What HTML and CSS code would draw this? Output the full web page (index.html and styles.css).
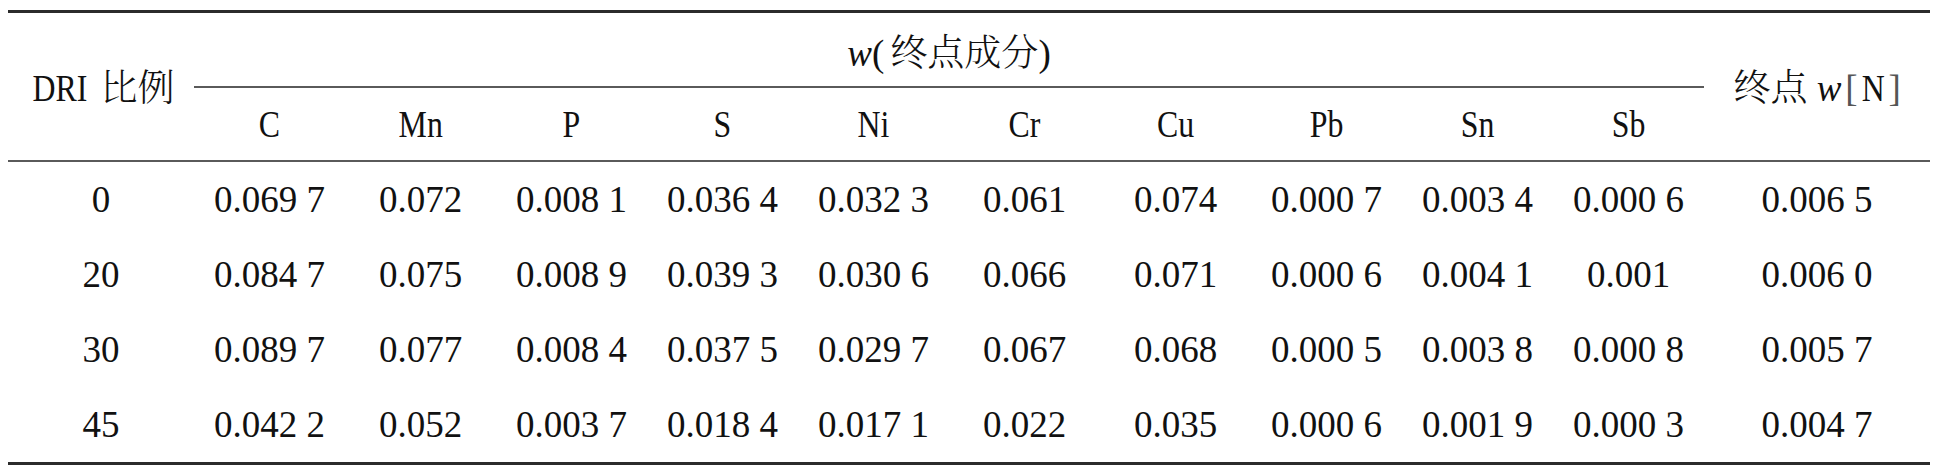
FILE: index.html
```html
<!DOCTYPE html>
<html lang="en">
<head>
<meta charset="utf-8">
<title>DRI table</title>
<link rel="stylesheet" href="styles.css">
</head>
<body>
<table class="tbl">
  <colgroup>
    <col class="c-first">
    <col class="c-el"><col class="c-el"><col class="c-el"><col class="c-el"><col class="c-el">
    <col class="c-el"><col class="c-el"><col class="c-el"><col class="c-el"><col class="c-el">
    <col class="c-last">
  </colgroup>
  <thead>
    <tr class="h1">
      <th rowspan="2" class="span2"><span class="nx">DRI</span> <span class="cjk" lang="zh-CN">比例</span></th>
      <th colspan="10" class="group"><i class="it">w</i><span class="paren">(</span><span class="cjk" lang="zh-CN">终点成分</span>)</th>
      <th rowspan="2" class="span2"><span class="cjk" lang="zh-CN">终点</span> <i class="it">w</i><span class="br">[</span><span class="nx">N</span><span class="br br-r">]</span></th>
    </tr>
    <tr class="h2">
      <th><span class="nx">C</span></th>
      <th><span class="nx">Mn</span></th>
      <th><span class="nx">P</span></th>
      <th><span class="nx">S</span></th>
      <th><span class="nx">Ni</span></th>
      <th><span class="nx">Cr</span></th>
      <th><span class="nx">Cu</span></th>
      <th><span class="nx">Pb</span></th>
      <th><span class="nx">Sn</span></th>
      <th><span class="nx">Sb</span></th>
    </tr>
  </thead>
  <tbody>
    <tr>
      <td>0</td><td>0.069 7</td><td>0.072</td><td>0.008 1</td><td>0.036 4</td><td>0.032 3</td><td>0.061</td><td>0.074</td><td>0.000 7</td><td>0.003 4</td><td>0.000 6</td><td>0.006 5</td>
    </tr>
    <tr>
      <td>20</td><td>0.084 7</td><td>0.075</td><td>0.008 9</td><td>0.039 3</td><td>0.030 6</td><td>0.066</td><td>0.071</td><td>0.000 6</td><td>0.004 1</td><td>0.001</td><td>0.006 0</td>
    </tr>
    <tr>
      <td>30</td><td>0.089 7</td><td>0.077</td><td>0.008 4</td><td>0.037 5</td><td>0.029 7</td><td>0.067</td><td>0.068</td><td>0.000 5</td><td>0.003 8</td><td>0.000 8</td><td>0.005 7</td>
    </tr>
    <tr>
      <td>45</td><td>0.042 2</td><td>0.052</td><td>0.003 7</td><td>0.018 4</td><td>0.017 1</td><td>0.022</td><td>0.035</td><td>0.000 6</td><td>0.001 9</td><td>0.000 3</td><td>0.004 7</td>
    </tr>
  </tbody>
</table>
</body>
</html>
```

FILE: styles.css
```css
html, body {
  background: #ffffff;
}

body {
  margin: 10px 0 0 8px;
  font-family: "Liberation Serif", "Times New Roman", serif;
  font-size: 37px;
  color: #111111;
}

.tbl {
  border-collapse: separate;
  border-spacing: 0;
  table-layout: fixed;
  width: 1922px;
  border-top: 3px solid #2b2b2b;
  border-bottom: 3px solid #2b2b2b;
}

.c-first { width: 186px; }
.c-el { width: 151px; }
.c-last { width: 226px; }

.tbl th,
.tbl td {
  padding: 0;
  text-align: center;
  vertical-align: middle;
  font-weight: normal;
  white-space: nowrap;
  line-height: 1;
}

.h1 th.group {
  height: 69px;
  padding-top: 4px;
  border-bottom: 2px solid #5a5a5a;
}

.h1 th.span2 {
  height: 147px;
  border-bottom: 2px solid #5a5a5a;
}

.h2 th {
  height: 72px;
  border-bottom: 2px solid #5a5a5a;
}

.tbl td {
  height: 75px;
}

.nx {
  display: inline-block;
  transform: scaleX(0.86);
}

.it {
  font-style: italic;
}

.cjk {
  font-family: "Noto Serif CJK SC", "Noto Sans CJK SC", sans-serif;
  font-weight: 300;
}

.paren {
  padding-right: 6px;
}

.br {
  display: inline-block;
  color: #555555;
  margin-left: 4px;
  margin-right: 2px;
}

.br-r {
  margin-left: 2px;
  margin-right: 0;
}
```
